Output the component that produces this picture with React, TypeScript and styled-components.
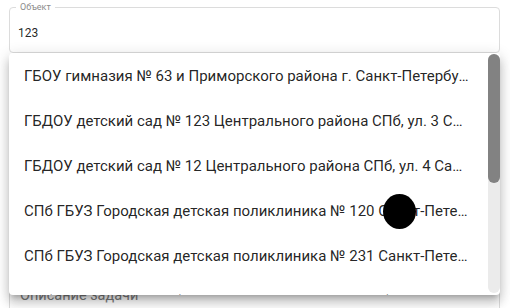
import React from 'react';
import styled, { createGlobalStyle } from 'styled-components';

const GlobalStyle = createGlobalStyle`
  html, body {
    margin: 0;
    padding: 0;
    overflow: hidden;
    background: #ffffff;
  }

  body {
    font-family: Roboto, 'Liberation Sans', Arial, sans-serif;
  }
`;

const Page = styled.div`
  position: relative;
  width: 510px;
  height: 308px;
  padding: 3px 10px 0 9px;
  box-sizing: border-box;
  display: flex;
  flex-direction: column;
  overflow: hidden;

  & > * {
    flex-shrink: 0;
  }
`;

const Field = styled.fieldset`
  margin: 0;
  padding: 0 6px;
  border: 1px solid #dcdcdc;
  border-radius: 4px;
  min-width: 0;
`;

const Legend = styled.legend`
  padding: 0 4px;
  font-size: 9px;
  line-height: 9px;
  color: #8c8c8c;
`;

const Input = styled.input`
  display: block;
  width: 100%;
  box-sizing: border-box;
  margin: 0;
  padding: 14px 2px 12px;
  border: none;
  outline: none;
  background: transparent;
  font-family: Roboto, 'Liberation Sans', Arial, sans-serif;
  font-size: 12px;
  line-height: 14px;
  color: rgba(0, 0, 0, 0.87);
`;

const POPUP_HEIGHT = 242;
const OPTION_HEIGHT = 45;
const TRACK_HEIGHT = POPUP_HEIGHT - 3;

const Popup = styled.div`
  position: relative;
  z-index: 2;
  height: ${POPUP_HEIGHT}px;
  display: flex;
  background: #ffffff;
  border-radius: 4px;
  overflow: hidden;
  box-shadow:
    0 5px 5px -3px rgba(0, 0, 0, 0.2),
    0 8px 10px 1px rgba(0, 0, 0, 0.14),
    0 3px 14px 2px rgba(0, 0, 0, 0.12);
`;

const Listbox = styled.ul`
  flex: 1;
  min-width: 0;
  margin: 0;
  padding: 0;
  list-style: none;
  overflow: hidden;
`;

const ScrollTrack = styled.div`
  width: 12px;
  height: ${TRACK_HEIGHT}px;
  margin-top: 1px;
  background: #ebebeb;
  border-radius: 6px;
`;

const ScrollThumb = styled.div`
  width: 100%;
  background: #828282;
  border-radius: 6px;
`;

const Option = styled.li`
  height: ${OPTION_HEIGHT}px;
  display: flex;
  align-items: center;
  padding: 0 18px 0 15px;
  font-size: 15px;
  color: rgba(0, 0, 0, 0.87);
  cursor: pointer;
`;

const OptionText = styled.span`
  white-space: nowrap;
  overflow: hidden;
  text-overflow: ellipsis;
`;

const NextField = styled.div`
  margin-top: -10px;
  height: 60px;
  border: 1px solid #dcdcdc;
  border-radius: 4px;
  padding: 2px 10px 0;
`;

const Placeholder = styled.span`
  display: block;
  font-size: 14.5px;
  line-height: 16px;
  color: #7c7c7c;
`;

const ClickMarker = styled.span`
  position: absolute;
  z-index: 3;
  left: 383px;
  top: 194px;
  width: 33px;
  height: 35px;
  border-radius: 50%;
  background: #000000;
  pointer-events: none;
`;

const options = [
  'ГБОУ гимназия № 63 и Приморского района г. Санкт-Петербурга',
  'ГБДОУ детский сад № 123 Центрального района СПб, ул. 3 Садовая',
  'ГБДОУ детский сад № 12 Центрального района СПб, ул. 4 Садовая',
  'СПб ГБУЗ Городская детская поликлиника № 120 Санкт-Петербурга',
  'СПб ГБУЗ Городская детская поликлиника № 231 Санкт-Петербурга',
  'СПб ГБУЗ Городская больница № 123 Санкт-Петербурга',
  'ГБОУ СОШ № 123 Выборгского района Санкт-Петербурга',
  'ГБОУ лицей № 123 Калининского района Санкт-Петербурга',
  'ГБДОУ детский сад № 123 Невского района СПб',
  'СПб ГБУЗ Стоматологическая поликлиника № 123',
];

const App = (): React.ReactElement => {
  // thumb length follows visible / total list height
  const thumbHeight = Math.round(
    (TRACK_HEIGHT * POPUP_HEIGHT) / (options.length * OPTION_HEIGHT),
  );

  return (
    <>
      <GlobalStyle />
      <Page>
        <Field>
          <Legend>Объект</Legend>
          <Input defaultValue='123' readOnly />
        </Field>
        <Popup>
          <Listbox role='listbox'>
            {options.map((option, index) => (
              <Option key={index} role='option'>
                <OptionText>{option}</OptionText>
              </Option>
            ))}
          </Listbox>
          <ScrollTrack>
            <ScrollThumb style={{ height: thumbHeight }} />
          </ScrollTrack>
        </Popup>
        <NextField>
          <Placeholder>Описание задачи</Placeholder>
        </NextField>
        <ClickMarker />
      </Page>
    </>
  );
};

export default App;
